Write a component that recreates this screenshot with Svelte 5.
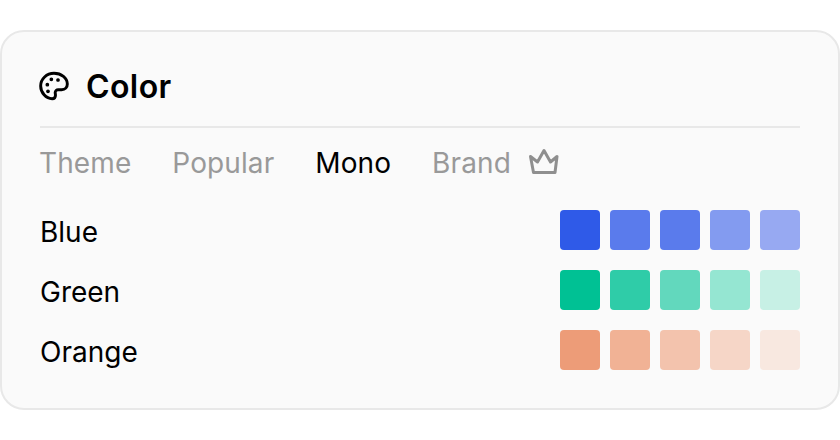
<script>
  const tabs = [
    { label: "Theme" },
    { label: "Popular" },
    { label: "Mono", active: true },
    { label: "Brand", premium: true },
  ];

  const palettes = [
    { name: "Blue", colors: ["#2f5ae8", "#5a7bec", "#5a7bec", "#839bf0", "#97a9f2"] },
    { name: "Green", colors: ["#00c194", "#2fcca8", "#62d8bd", "#95e6d2", "#c7f0e5"] },
    { name: "Orange", colors: ["#ed9c78", "#f1b295", "#f3c3ad", "#f6d6c7", "#f8e8e0"] },
  ];
</script>

<div class="page">
  <section class="card">
    <header class="title">
      <svg class="palette" width="32" height="32" viewBox="0 0 24 24" fill="none" stroke="currentColor" stroke-width="2.2" stroke-linecap="round" stroke-linejoin="round">
        <path d="M12 2.500C6.500 2.500 2 6.700 2 12c0 5 4 9.500 8.600 9.500 1.900 0 2.500-1.300 2.500-2.600 0-.8-.2-1.300-.2-2 0-1.300 1-2.100 2.200-2.100h2.600c2.700 0 4.300-1.900 4.300-4.300C22 6 17.500 2.500 12 2.500Z" />
        <circle cx="7" cy="11" r="0.9" fill="currentColor" stroke-width="1" />
        <circle cx="10" cy="7" r="0.9" fill="currentColor" stroke-width="1" />
        <circle cx="15" cy="7.500" r="0.9" fill="currentColor" stroke-width="1" />
        <circle cx="7.500" cy="16" r="0.9" fill="currentColor" stroke-width="1" />
      </svg>
      <h2>Color</h2>
    </header>

    <nav class="tabs">
      {#each tabs as tab}
        <span class="tab" class:active={tab.active}>
          {tab.label}
          {#if tab.premium}
            <svg class="crown" width="32" height="28" viewBox="0 0 32 28" fill="none" stroke="currentColor" stroke-width="3" stroke-linejoin="round">
              <path d="M2.500 8.500 9.500 14 16 2.500 22.500 14 29 8.500 27 24.500H5.500Z" />
            </svg>
          {/if}
        </span>
      {/each}
    </nav>

    <div class="rows">
      {#each palettes as palette}
        <div class="row">
          <span class="name">{palette.name}</span>
          <div class="swatches">
            {#each palette.colors as color}
              <span class="swatch" style="background: {color}"></span>
            {/each}
          </div>
        </div>
      {/each}
    </div>
  </section>
</div>

<style>
  :global(body) {
    background: #fff;
  }

  .page {
    width: 840px;
    height: 440px;
    padding: 30px 0 0;
    box-sizing: border-box;
    font-family: Inter, "Noto Sans", sans-serif;
  }

  .card {
    box-sizing: border-box;
    width: 840px;
    height: 380px;
    padding: 30px 38px 0;
    background: #fafafa;
    border: 2px solid #e8e8e8;
    border-radius: 24px;
  }

  .title {
    display: flex;
    align-items: center;
    gap: 16px;
    height: 70px;
    border-bottom: 2px solid #e8e8e8;
    padding-bottom: 4px;
    box-sizing: border-box;
    margin-top: -4px;
  }

  .palette {
    color: #000;
    margin-left: -2px;
    margin-top: -8px;
  }

  h2 {
    margin: -6px 0 0;
    font-size: 32px;
    font-weight: 600;
    letter-spacing: 0.4px;
    color: #000;
    line-height: 40px;
  }

  .tabs {
    display: flex;
    gap: 41px;
    height: 36px;
    margin-top: 17px;
    margin-left: -1px;
    align-items: center;
    font-size: 28px;
    letter-spacing: 0.1px;
    color: #999;
  }

  .tab {
    display: flex;
    align-items: center;
    gap: 17px;
  }

  .tab.active {
    color: #000;
  }

  .crown {
    color: #8f8f8f;
    margin-top: -2px;
  }

  .rows {
    display: flex;
    flex-direction: column;
    gap: 20px;
    margin-top: 29px;
  }

  .row {
    display: flex;
    align-items: center;
    justify-content: space-between;
    height: 40px;
    font-size: 28px;
    color: #000;
  }

  .name {
    padding-top: 3px;
    font-weight: 410;
  }

  .swatches {
    display: flex;
    gap: 10px;
  }

  .swatch {
    width: 40px;
    height: 40px;
    border-radius: 4px;
  }
</style>
